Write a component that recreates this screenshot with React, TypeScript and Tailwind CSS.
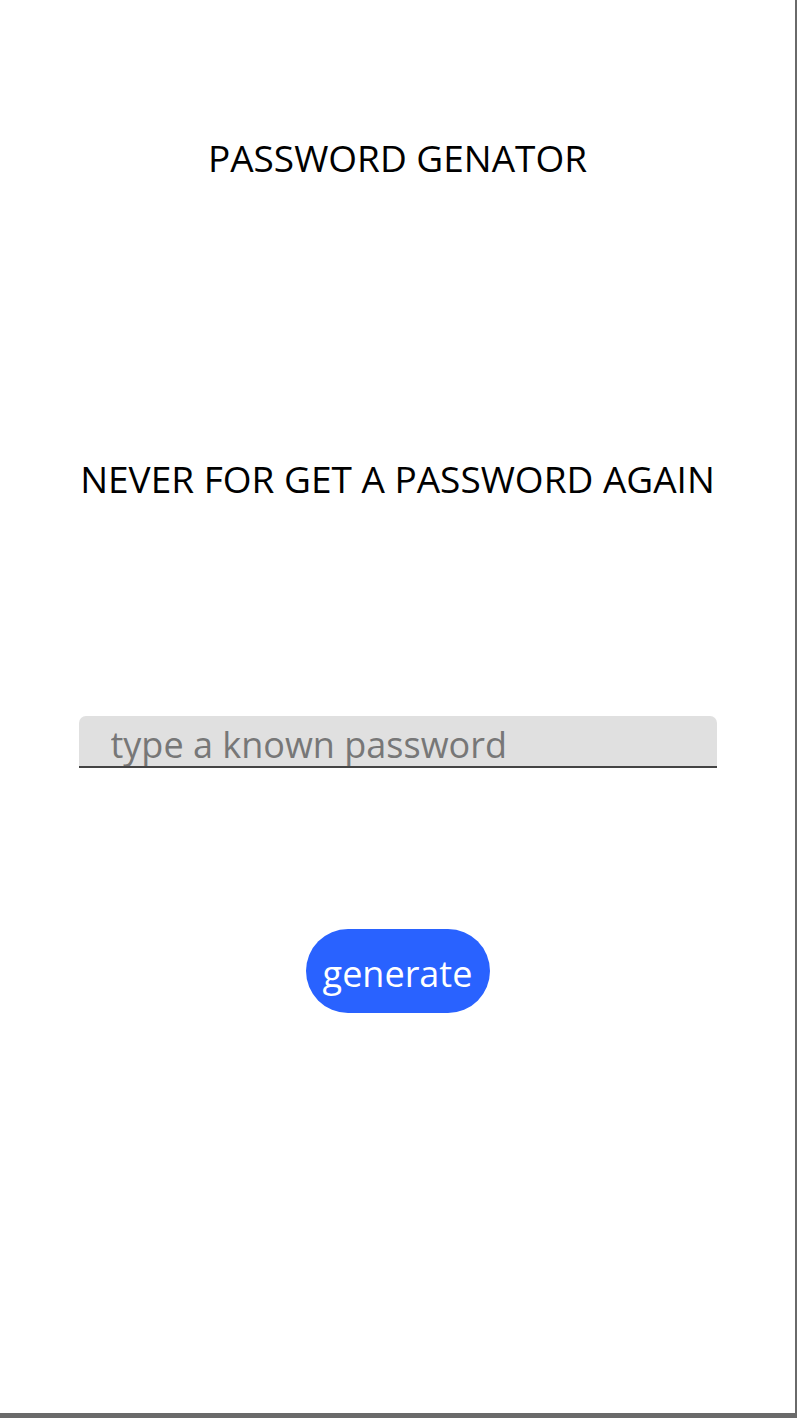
export default function App() {
  return (
    <div className="w-[797px] h-[1418px] bg-white border-r-2 border-b-[5px] border-[#6a6a6a]">
      <div
        className="flex flex-col items-center text-black"
        style={{ fontFamily: '"Open Sans", "Noto Sans", sans-serif' }}
      >
        <h1 className="mt-[134px] h-[48px] leading-[48px] text-[37px] font-normal">PASSWORD GENATOR</h1>
        <h2 className="mt-[273px] h-[48px] leading-[48px] text-[37px] font-normal">NEVER FOR GET A PASSWORD AGAIN</h2>
        <input
          type="text"
          placeholder="type a known password"
          className="mt-[213px] w-[638px] h-[52px] rounded-t-[7px] bg-[#e0e0e0] border-b-2 border-[#444] pl-8 pt-2 text-[36px] text-black placeholder:text-[#777] outline-none"
        />
        <button className="mt-[161px] w-[184px] h-[84px] rounded-full bg-[#2962ff] text-white text-[36px] pt-[6px]">
          generate
        </button>
      </div>
    </div>
  )
}
